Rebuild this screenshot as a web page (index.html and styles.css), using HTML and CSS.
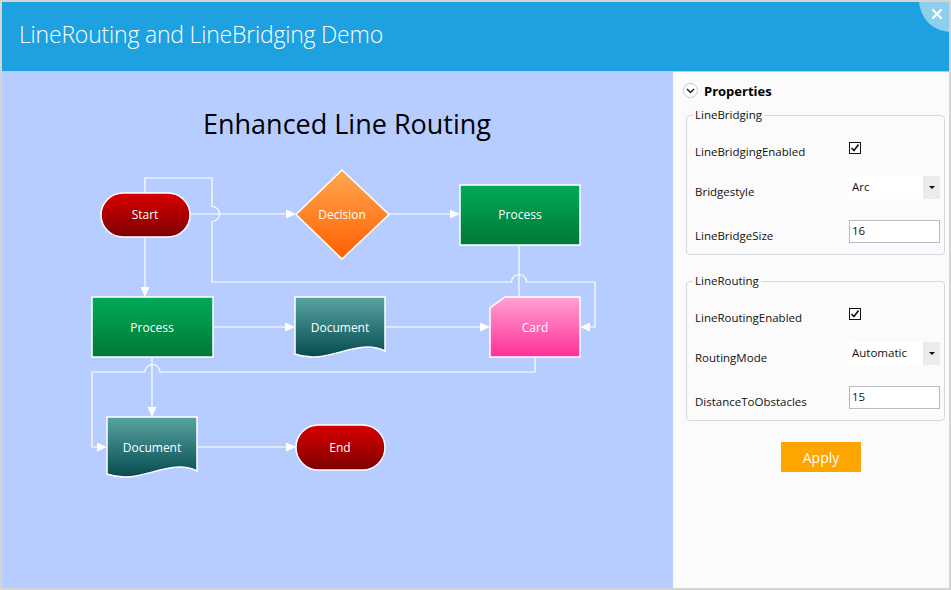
FILE: index.html
```html
<!DOCTYPE html>
<html>
<head>
<meta charset="utf-8">
<link rel="stylesheet" href="styles.css">
</head>
<body>
<div class="window">
  <header class="titlebar">
    <h1>LineRouting and LineBridging Demo</h1>
    <div class="close" role="button" aria-label="Close">
      <svg width="10" height="10" viewBox="0 0 10 10"><path d="M1 1 L9 9 M9 1 L1 9" stroke="#fff" stroke-width="2.2" stroke-linecap="square"/></svg>
    </div>
  </header>
  <div class="main">
    <div class="canvas">
      <svg width="671" height="516" viewBox="2 72 671 516" xmlns="http://www.w3.org/2000/svg">
        <defs>
          <linearGradient id="gRed" x1="0" y1="0" x2="0" y2="1"><stop offset="0" stop-color="#d80000"/><stop offset="1" stop-color="#7e0000"/></linearGradient>
          <linearGradient id="gGreen" x1="0" y1="0" x2="0" y2="1"><stop offset="0" stop-color="#00ab58"/><stop offset="1" stop-color="#007839"/></linearGradient>
          <linearGradient id="gOrange" x1="0" y1="0" x2="0" y2="1"><stop offset="0" stop-color="#ffa850"/><stop offset="1" stop-color="#ff5f00"/></linearGradient>
          <linearGradient id="gTeal" x1="0" y1="0" x2="0" y2="1"><stop offset="0" stop-color="#58a5a2"/><stop offset="1" stop-color="#064a50"/></linearGradient>
          <linearGradient id="gPink" x1="0" y1="0" x2="0" y2="1"><stop offset="0" stop-color="#ffa2d2"/><stop offset="1" stop-color="#ff2f98"/></linearGradient>
        </defs>
        <text class="dtitle" x="347" y="134" text-anchor="middle">Enhanced Line Routing</text>

        <g class="wire">
          <path d="M145 193 V178 H212 V206.5 A7.5 7.5 0 0 1 212 221.5 V282 H511.5 A7.5 7.5 0 0 1 526.5 282 H595 V327 H590"/>
          <path d="M145 237 V287"/>
          <path d="M190 214 H286"/>
          <path d="M389 214 H450"/>
          <path d="M519 245 V297"/>
          <path d="M213 327 H285"/>
          <path d="M385 327 H480"/>
          <path d="M535 357 V372 H160 A7.5 7.5 0 0 0 145 372 H92 V447 H97"/>
          <path d="M152 357 V407"/>
          <path d="M197 447 H286"/>
        </g>
        <g class="head">
          <polygon points="580,327 590,322.5 590,331.5"/>
          <polygon points="145,297 140.5,287 149.5,287"/>
          <polygon points="296,214 286,209.5 286,218.5"/>
          <polygon points="460,214 450,209.5 450,218.5"/>
          <polygon points="295,327 285,322.5 285,331.5"/>
          <polygon points="490,327 480,322.5 480,331.5"/>
          <polygon points="107,447 97,442.5 97,451.5"/>
          <polygon points="152,417 147.5,407 156.5,407"/>
          <polygon points="296,447 286,442.5 286,451.5"/>
        </g>

        <g class="node">
          <rect x="101" y="193" width="89" height="44" rx="22" fill="url(#gRed)"/>
          <polygon points="342,170 389,214.5 342,259 296,214.5" fill="url(#gOrange)"/>
          <rect x="460" y="185" width="120" height="60" fill="url(#gGreen)"/>
          <rect x="92" y="297" width="121" height="60" fill="url(#gGreen)"/>
          <path d="M295 297 H385 V351 C357 337 327 366 295 354 Z" fill="url(#gTeal)"/>
          <path d="M505 297 H580 V357 H490 V308 Z" fill="url(#gPink)"/>
          <path d="M107 417 H197 V471 C169 457 139 486 107 474 Z" fill="url(#gTeal)"/>
          <rect x="296" y="425" width="89" height="45" rx="22.5" fill="url(#gRed)"/>
        </g>
        <g class="label">
          <text x="145" y="219">Start</text>
          <text x="342" y="219">Decision</text>
          <text x="520" y="219">Process</text>
          <text x="152" y="332">Process</text>
          <text x="340" y="332">Document</text>
          <text x="535" y="332">Card</text>
          <text x="152" y="452">Document</text>
          <text x="340" y="452">End</text>
        </g>
      </svg>
    </div>
    <aside class="panel">
      <div class="panel-head">
        <span class="chev"><svg width="9" height="6" viewBox="0 0 9 6"><path d="M1 1 L4.5 4.5 L8 1" fill="none" stroke="#222" stroke-width="1.5"/></svg></span>
        <span>Properties</span>
      </div>
      <fieldset class="group">
        <legend>LineBridging</legend>
        <div class="row">
          <label>LineBridgingEnabled</label>
          <span class="check"><svg width="12" height="12" viewBox="0 0 12 12"><rect x="0.5" y="0.5" width="11" height="11" fill="#fff" stroke="#111"/><path d="M2.5 6 L5 8.5 L9.5 2.5" fill="none" stroke="#111" stroke-width="1.6"/></svg></span>
        </div>
        <div class="row combo-row">
          <label>Bridgestyle</label>
          <div class="combo"><span class="combo-text">Arc</span><span class="combo-btn"><i class="tri"></i></span></div>
        </div>
        <div class="row text-row">
          <label>LineBridgeSize</label>
          <div class="textbox">16</div>
        </div>
      </fieldset>
      <fieldset class="group">
        <legend>LineRouting</legend>
        <div class="row">
          <label>LineRoutingEnabled</label>
          <span class="check"><svg width="12" height="12" viewBox="0 0 12 12"><rect x="0.5" y="0.5" width="11" height="11" fill="#fff" stroke="#111"/><path d="M2.5 6 L5 8.5 L9.5 2.5" fill="none" stroke="#111" stroke-width="1.6"/></svg></span>
        </div>
        <div class="row combo-row">
          <label>RoutingMode</label>
          <div class="combo"><span class="combo-text">Automatic</span><span class="combo-btn"><i class="tri"></i></span></div>
        </div>
        <div class="row text-row">
          <label>DistanceToObstacles</label>
          <div class="textbox">15</div>
        </div>
      </fieldset>
      <button class="apply">Apply</button>
    </aside>
  </div>
</div>
</body>
</html>
```

FILE: styles.css
```css
* { box-sizing: border-box; }
html, body { margin: 0; padding: 0; }
body {
  width: 951px;
  height: 590px;
  overflow: hidden;
  font-family: "Open Sans", "Noto Sans", sans-serif;
  background: #d4d4d4;
}
.window {
  width: 951px;
  height: 590px;
  border: 2px solid #d4d4d4;
  display: flex;
  flex-direction: column;
  position: relative;
  overflow: hidden;
  background: #fbfbfb;
}
.titlebar {
  flex: none;
  height: 70px;
  background: #1da1e1;
  border-bottom: 1px solid #c3c8cf;
  display: flex;
  align-items: center;
  padding-left: 17px;
  position: relative;
}
.titlebar h1 {
  margin: 0 0 6px 0;
  font-weight: 300;
  font-size: 23px;
  color: #fff;
  letter-spacing: -0.2px;
}
.close {
  position: absolute;
  top: -34px;
  right: -34px;
  width: 64px;
  height: 64px;
  border-radius: 50%;
  padding: 41px 0 0 13px;
  background: #8ecfee;
  line-height: 0;
}
.main {
  flex: 1;
  display: flex;
  min-height: 0;
}
.canvas {
  flex: none;
  width: 671px;
  background: #b7cdff;
}
.canvas svg { display: block; }
.dtitle {
  font-family: "Open Sans", "Noto Sans", sans-serif;
  font-size: 27px;
  fill: #000;
}
.wire path { fill: none; stroke: #fff; stroke-width: 1.2; }
.head polygon { fill: #fff; }
.node > * { stroke: #fff; stroke-width: 1.5; }
.label text {
  font-family: "Open Sans", "Noto Sans", sans-serif;
  font-size: 12px;
  fill: #fff;
  text-anchor: middle;
}
.panel {
  flex: 1;
  background: #fbfbfb;
  font-size: 11.5px;
  color: #111;
}
.panel-head {
  display: flex;
  align-items: center;
  gap: 6px;
  height: 15px;
  margin: 11px 0 0 10px;
  font-weight: 700;
  font-size: 13px;
  color: #000;
}
.chev {
  width: 15px;
  height: 15px;
  border: 1px solid #c9c9c9;
  border-radius: 50%;
  background: #fff;
  display: flex;
  align-items: center;
  justify-content: center;
  padding-top: 1px;
}
.group {
  margin: 9px 4px 0 13px;
  border: 1px solid #d3dae4;
  border-radius: 4px;
  padding: 13px 4px 11px 8px;
  min-width: 0;
}
.group + .group { margin-top: 18px; }
.group legend {
  padding: 0 2px;
  margin-left: -2px;
  font-size: 11.5px;
  line-height: 16px;
}
.row {
  display: grid;
  grid-template-columns: 154px 91px;
  height: 23px;
}
.row label {
  padding-top: 8px;
  line-height: 16px;
  white-space: nowrap;
}
.check { margin-top: 6px; height: 12px; display: block; line-height: 0; }
.combo-row { margin-top: 17px; }
.text-row { margin-top: 21px; }
.combo {
  display: flex;
  height: 23px;
  background: #fff;
}
.combo-text {
  flex: 1;
  padding-left: 3px;
  line-height: 22px;
}
.combo-btn {
  width: 17px;
  background: #ebebeb;
  display: flex;
  align-items: center;
  justify-content: center;
}
.tri {
  width: 0;
  height: 0;
  border-left: 3px solid transparent;
  border-right: 3px solid transparent;
  border-top: 3px solid #111;
}
.textbox {
  height: 23px;
  border: 1px solid #b7bcc4;
  background: #fff;
  padding-left: 2px;
  line-height: 20px;
}
.apply {
  display: block;
  margin: 21px 0 0 108px;
  width: 80px;
  height: 30px;
  border: 0;
  background: #ffa500;
  color: #fff;
  font-family: "Open Sans", "Noto Sans", sans-serif;
  font-size: 14px;
  padding: 0;
}
```
